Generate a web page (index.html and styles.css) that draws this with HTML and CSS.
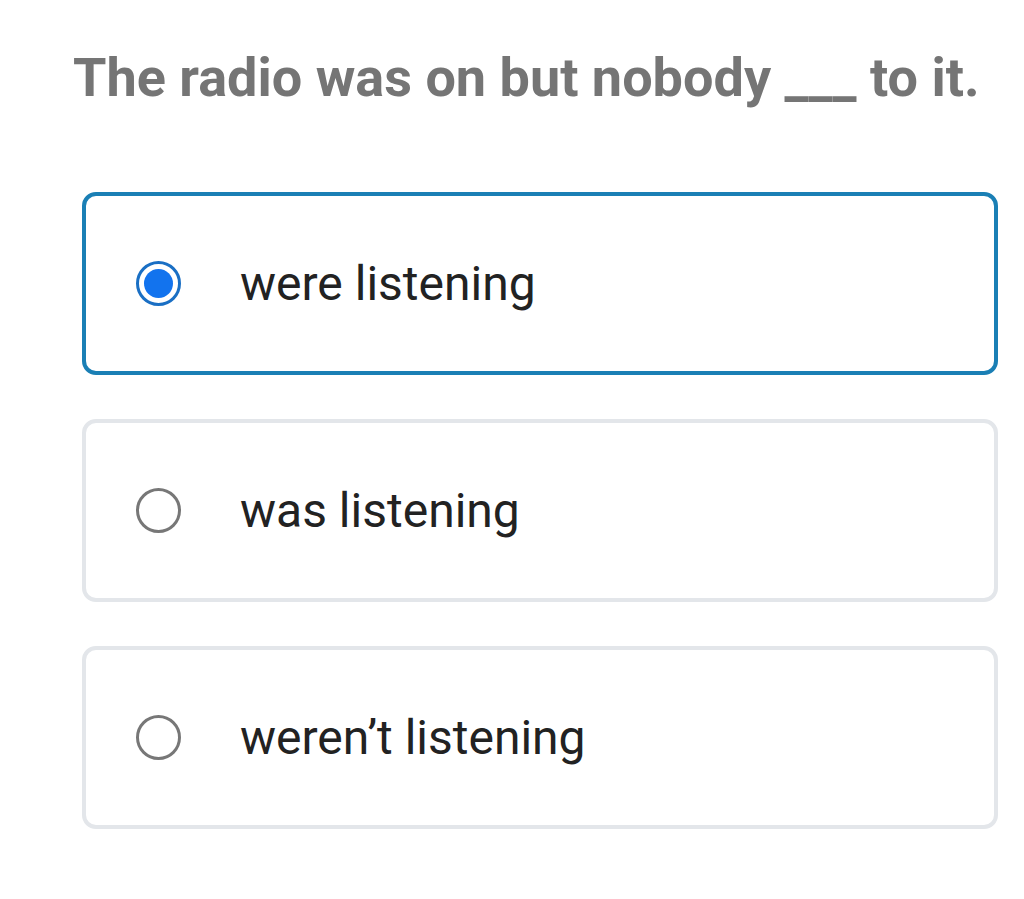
FILE: index.html
```html
<!DOCTYPE html>
<html>
<head>
<meta charset="utf-8">
<link rel="stylesheet" href="styles.css">
</head>
<body>
<div class="page">
  <h1 class="question">The radio was on but nobody ___ to it.</h1>
  <div class="options">
    <label class="option selected">
      <span class="radio"><span class="dot"></span></span>
      <span class="text">were listening</span>
    </label>
    <label class="option">
      <span class="radio"></span>
      <span class="text">was listening</span>
    </label>
    <label class="option">
      <span class="radio"></span>
      <span class="text">weren’t listening</span>
    </label>
  </div>
</div>
</body>
</html>
```
FILE: styles.css
```css
html, body {
  margin: 0;
  padding: 0;
  background: #ffffff;
}
.page {
  font-family: Roboto, "Liberation Sans", sans-serif;
  padding: 46px 26px 0 82px;
}
.question {
  margin: 0 0 82px -9px;
  font-size: 54px;
  font-weight: 700;
  color: #757575;
  line-height: 64px;
  white-space: nowrap;
}
.options {
  display: flex;
  flex-direction: column;
  gap: 44px;
}
.option {
  box-sizing: border-box;
  height: 183px;
  border: 4px solid #e3e6ea;
  border-radius: 14px;
  display: flex;
  align-items: center;
  padding-left: 50px;
}
.option.selected {
  border-color: #1a7fb5;
}
.radio {
  box-sizing: border-box;
  width: 45px;
  height: 45px;
  border: 3px solid #777777;
  border-radius: 50%;
  display: flex;
  align-items: center;
  justify-content: center;
  flex: none;
}
.selected .radio {
  border-color: #1a6fc4;
}
.dot {
  width: 29px;
  height: 29px;
  border-radius: 50%;
  background: #1273ee;
}
.text {
  margin-left: 59px;
  font-size: 48px;
  color: #222222;
}
```
